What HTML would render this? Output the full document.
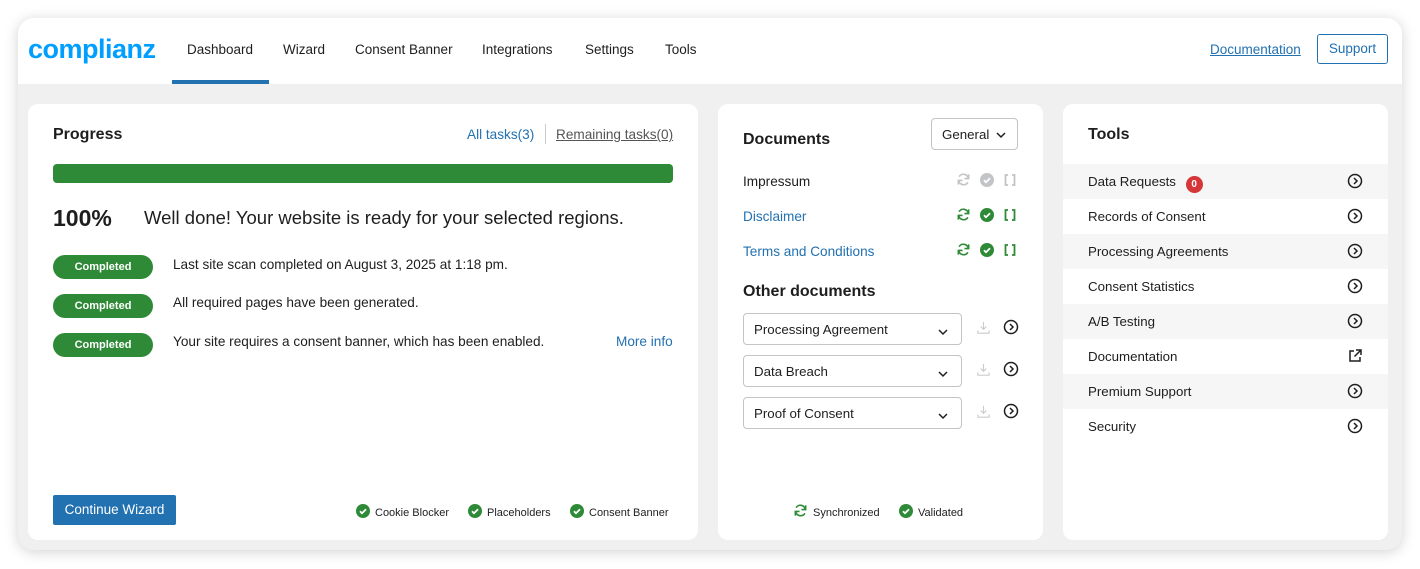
<!DOCTYPE html><html><head><style>
*{box-sizing:border-box;margin:0;padding:0}
body{width:1420px;height:569px;background:#fff;font-family:"Liberation Sans",sans-serif;color:#1e1e1e;position:relative;overflow:hidden}
.frame{position:absolute;left:18px;top:18px;width:1384px;height:532px;border-radius:16px;background:#f0f0f1;box-shadow:0 2px 14px rgba(0,0,0,.18);overflow:hidden}
.hdr{position:absolute;left:0;top:0;width:100%;height:66px;background:#fff}
.logo{position:absolute;left:10px;top:16px;font-size:27px;font-weight:bold;color:#009fff;letter-spacing:-0.5px}
.nav{position:absolute;top:24px;font-size:13.5px;color:#1e1e1e}
.ul{position:absolute;left:154px;top:62px;width:97px;height:4px;background:#2271b1}
a{color:#2271b1}
.card{position:absolute;top:86px;height:436px;background:#fff;border-radius:10px}
.t{position:absolute;font-size:13.6px}
.h{position:absolute;font-size:16px;font-weight:bold}
.badge{position:absolute;left:25px;width:100px;height:24px;border-radius:12px;background:#2e8a37;color:#fff;font-size:11px;font-weight:bold;text-align:center;line-height:24px}
.row{position:absolute;left:0;width:325px;height:35px;font-size:13.3px;padding:10px 25px}
.row.g{background:#f6f6f6}
.row svg{position:absolute;right:25px;top:9px}
.sel{position:absolute;left:25px;width:219px;height:32px;border:1px solid #c3c4c7;border-radius:4px;font-size:13.3px;padding:8px 10px}
.sel svg{position:absolute;right:10px;top:10px}
.chk{display:inline-block;vertical-align:-2px;margin-right:5px}
</style></head><body>
<svg width="0" height="0" style="position:absolute"><defs>
<symbol id="ck" viewBox="0 0 14 14"><circle cx="7" cy="7" r="7" fill="currentColor"/><path d="M4 7.2l2 2 4-4" stroke="#fff" stroke-width="1.8" fill="none"/></symbol>
<symbol id="ar" viewBox="0 0 16 16"><circle cx="8" cy="8" r="6.5" stroke="#1e1e1e" stroke-width="1.5" fill="none"/><path d="M7 5l3 3-3 3" stroke="#1e1e1e" stroke-width="1.5" fill="none"/></symbol>
<symbol id="sy" viewBox="0 0 16 16"><path d="M13 6.5A5.3 5.3 0 0 0 3.3 5M3 9.5A5.3 5.3 0 0 0 12.7 11" stroke="currentColor" stroke-width="1.7" fill="none"/><path d="M13.5 2.5v4.5H9M2.5 13.5V9H7" stroke="currentColor" stroke-width="1.7" fill="none"/></symbol>
<symbol id="br" viewBox="0 0 14 14"><path d="M5 2H2.5v10H5M9 2h2.5v10H9" stroke="currentColor" stroke-width="1.8" fill="none"/></symbol>
<symbol id="dn" viewBox="0 0 24 24"><path d="M6 9l6 6 6-6" stroke="#1e1e1e" stroke-width="2.2" fill="none"/></symbol>
<symbol id="dl" viewBox="0 0 16 16"><path d="M8 2v8M5 7l3 3 3-3M2 11v3h12v-3" stroke="#ccc" stroke-width="1.2" fill="none"/></symbol>
</defs></svg>
<div class="frame">
<div class="hdr">
<div class="logo">complianz</div>
<div class="nav" style="left:169px">Dashboard</div>
<div class="nav" style="left:265px">Wizard</div>
<div class="nav" style="left:337px">Consent Banner</div>
<div class="nav" style="left:464px">Integrations</div>
<div class="nav" style="left:567px">Settings</div>
<div class="nav" style="left:647px">Tools</div>
<div class="ul"></div>
<a class="nav" style="left:1192px;color:#2271b1;text-decoration:underline">Documentation</a>
<div class="nav" style="left:1299px;top:16px;width:71px;height:30px;border:1px solid #2271b1;border-radius:3px;color:#2271b1;text-align:center;line-height:28px">Support</div>
</div>
<div class="card" style="left:10px;width:670px">
<div class="h" style="left:25px;top:22px">Progress</div>
<a class="t" style="left:439px;top:23px;text-decoration:none">All tasks(3)</a>
<div style="position:absolute;left:517px;top:20px;width:1px;height:20px;background:#ccc"></div>
<div class="t" style="left:528px;top:23px;color:#555;text-decoration:underline">Remaining tasks(0)</div>
<div style="position:absolute;left:25px;top:60px;width:620px;height:19px;background:#2e8a37;border-radius:4px"></div>
<div style="position:absolute;left:25px;top:101px;font-size:23px;font-weight:bold">100%</div>
<div style="position:absolute;left:116px;top:103px;font-size:18.5px;font-weight:500">Well done! Your website is ready for your selected regions.</div>
<div class="badge" style="top:151px">Completed</div><div class="t" style="left:145px;top:153px">Last site scan completed on August 3, 2025 at 1:18 pm.</div>
<div class="badge" style="top:190px">Completed</div><div class="t" style="left:145px;top:191px">All required pages have been generated.</div>
<div class="badge" style="top:229px">Completed</div><div class="t" style="left:145px;top:230px">Your site requires a consent banner, which has been enabled.</div>
<a class="t" style="left:588px;top:230px">More info</a>
<div style="position:absolute;left:25px;top:391px;width:123px;height:30px;background:#2271b1;border-radius:2px;color:#fff;font-size:13.5px;text-align:center;line-height:30px">Continue Wizard</div>
<div class="t" style="left:328px;top:400px;font-size:11px;color:#2e8a37"><svg class="chk" width="14" height="14"><use href="#ck"/></svg><span style="color:#1e1e1e">Cookie Blocker</span></div>
<div class="t" style="left:440px;top:400px;font-size:11px;color:#2e8a37"><svg class="chk" width="14" height="14"><use href="#ck"/></svg><span style="color:#1e1e1e">Placeholders</span></div>
<div class="t" style="left:542px;top:400px;font-size:11px;color:#2e8a37"><svg class="chk" width="14" height="14"><use href="#ck"/></svg><span style="color:#1e1e1e">Consent Banner</span></div>
</div>
<div class="card" style="left:700px;width:325px">
<div class="h" style="left:25px;top:27px">Documents</div>
<div style="position:absolute;left:213px;top:14px;width:87px;height:32px;border:1px solid #c3c4c7;border-radius:4px;font-size:13.3px;padding:8px 10px">General<svg style="position:absolute;right:8px;top:8px" width="16" height="16" viewBox="0 0 24 24"><use href="#dn"/></svg></div>
<div class="t" style="left:25px;top:70px">Impressum</div>
<a class="t" style="left:25px;top:105px">Disclaimer</a>
<a class="t" style="left:25px;top:140px">Terms and Conditions</a>
<div style="position:absolute;left:238px;top:68px;color:#c3c4c7"><svg width="15" height="15"><use href="#sy"/></svg> <svg width="14" height="14" style="margin-left:5px"><use href="#ck"/></svg> <svg width="14" height="14" style="margin-left:4px"><use href="#br"/></svg></div>
<div style="position:absolute;left:238px;top:103px;color:#2e8a37"><svg width="15" height="15"><use href="#sy"/></svg> <svg width="14" height="14" style="margin-left:5px"><use href="#ck"/></svg> <svg width="14" height="14" style="margin-left:4px"><use href="#br"/></svg></div>
<div style="position:absolute;left:238px;top:138px;color:#2e8a37"><svg width="15" height="15"><use href="#sy"/></svg> <svg width="14" height="14" style="margin-left:5px"><use href="#ck"/></svg> <svg width="14" height="14" style="margin-left:4px"><use href="#br"/></svg></div>
<div class="h" style="left:25px;top:179px">Other documents</div>
<div class="sel" style="top:209px">Processing Agreement<svg width="16" height="16"><use href="#dn"/></svg></div>
<div class="sel" style="top:251px">Data Breach<svg width="16" height="16"><use href="#dn"/></svg></div>
<div class="sel" style="top:293px">Proof of Consent<svg width="16" height="16"><use href="#dn"/></svg></div>
<svg style="position:absolute;left:258px;top:216px" width="15" height="15"><use href="#dl"/></svg><svg style="position:absolute;left:285px;top:215px" width="16" height="16"><use href="#ar"/></svg>
<svg style="position:absolute;left:258px;top:258px" width="15" height="15"><use href="#dl"/></svg><svg style="position:absolute;left:285px;top:257px" width="16" height="16"><use href="#ar"/></svg>
<svg style="position:absolute;left:258px;top:300px" width="15" height="15"><use href="#dl"/></svg><svg style="position:absolute;left:285px;top:299px" width="16" height="16"><use href="#ar"/></svg>
<div class="t" style="left:75px;top:399px;font-size:11px;color:#2e8a37"><svg class="chk" width="15" height="15"><use href="#sy"/></svg><span style="color:#1e1e1e">Synchronized</span></div>
<div class="t" style="left:181px;top:400px;font-size:11px;color:#2e8a37"><svg class="chk" width="14" height="14"><use href="#ck"/></svg><span style="color:#1e1e1e">Validated</span></div>
</div>
<div class="card" style="left:1045px;width:325px">
<div class="h" style="left:25px;top:22px">Tools</div>
<div class="row g" style="top:60px">Data Requests <span style="display:inline-block;width:17px;height:17px;border-radius:50%;background:#d63638;color:#fff;font-size:10px;font-weight:bold;text-align:center;line-height:17px;margin-left:6px;vertical-align:-1px">0</span><svg width="16" height="16"><use href="#ar"/></svg></div>
<div class="row" style="top:95px">Records of Consent<svg width="16" height="16"><use href="#ar"/></svg></div>
<div class="row g" style="top:130px">Processing Agreements<svg width="16" height="16"><use href="#ar"/></svg></div>
<div class="row" style="top:165px">Consent Statistics<svg width="16" height="16"><use href="#ar"/></svg></div>
<div class="row g" style="top:200px">A/B Testing<svg width="16" height="16"><use href="#ar"/></svg></div>
<div class="row" style="top:235px">Documentation<svg width="16" height="16" viewBox="0 0 16 16"><path d="M7 3H3v10h10V9M9 2h5v5M14 2L7.5 8.5" stroke="#1e1e1e" stroke-width="1.5" fill="none"/></svg></div>
<div class="row g" style="top:270px">Premium Support<svg width="16" height="16"><use href="#ar"/></svg></div>
<div class="row" style="top:305px">Security<svg width="16" height="16"><use href="#ar"/></svg></div>
</div>
</div>
</body></html>
